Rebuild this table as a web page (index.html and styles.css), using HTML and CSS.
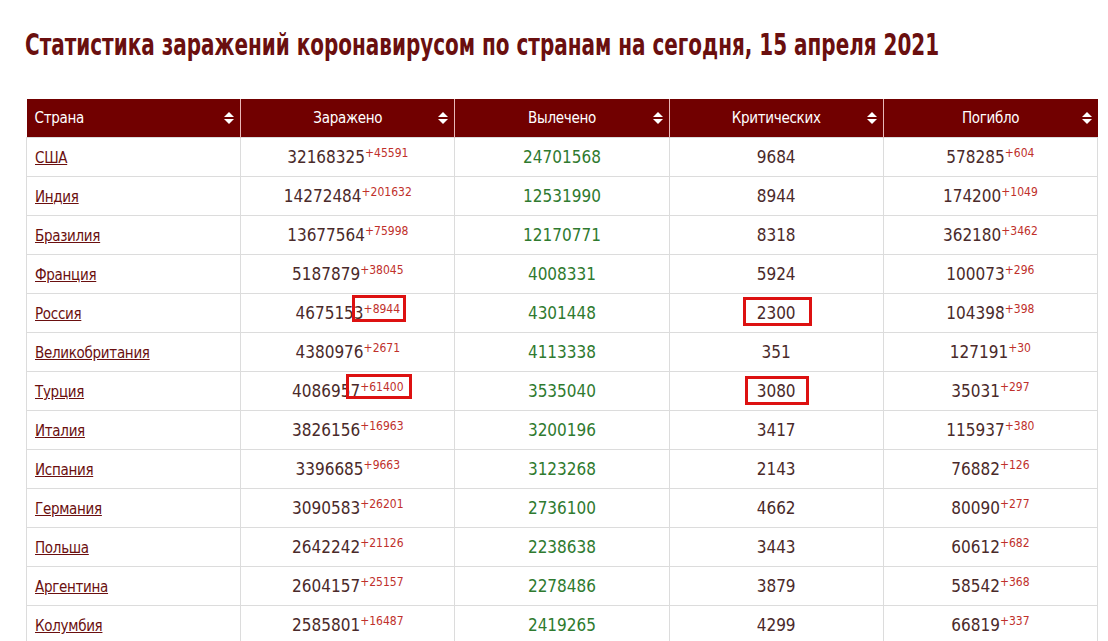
FILE: index.html
```html
<!DOCTYPE html>
<html lang="ru">
<head>
<meta charset="utf-8">
<title>Статистика</title>
<link rel="stylesheet" href="styles.css">
</head>
<body>
<div class="page">
  <h1 class="title">Статистика заражений коронавирусом по странам на сегодня, 15 апреля 2021</h1>
  <div class="table-wrap">
    <table class="stats">
      <thead>
        <tr>
          <th class="left">Страна<span class="sort"></span></th>
          <th>Заражено<span class="sort"></span></th>
          <th>Вылечено<span class="sort"></span></th>
          <th>Критических<span class="sort"></span></th>
          <th>Погибло<span class="sort"></span></th>
        </tr>
      </thead>
      <tbody>
        <tr><td class="left"><a href="#">США</a></td><td>32168325<sup>+45591</sup></td><td class="green">24701568</td><td>9684</td><td>578285<sup>+604</sup></td></tr>
        <tr><td class="left"><a href="#">Индия</a></td><td>14272484<sup>+201632</sup></td><td class="green">12531990</td><td>8944</td><td>174200<sup>+1049</sup></td></tr>
        <tr><td class="left"><a href="#">Бразилия</a></td><td>13677564<sup>+75998</sup></td><td class="green">12170771</td><td>8318</td><td>362180<sup>+3462</sup></td></tr>
        <tr><td class="left"><a href="#">Франция</a></td><td>5187879<sup>+38045</sup></td><td class="green">4008331</td><td>5924</td><td>100073<sup>+296</sup></td></tr>
        <tr><td class="left"><a href="#">Россия</a></td><td>4675153<sup>+8944</sup></td><td class="green">4301448</td><td>2300</td><td>104398<sup>+398</sup></td></tr>
        <tr><td class="left"><a href="#">Великобритания</a></td><td>4380976<sup>+2671</sup></td><td class="green">4113338</td><td>351</td><td>127191<sup>+30</sup></td></tr>
        <tr><td class="left"><a href="#">Турция</a></td><td>4086957<sup>+61400</sup></td><td class="green">3535040</td><td>3080</td><td>35031<sup>+297</sup></td></tr>
        <tr><td class="left"><a href="#">Италия</a></td><td>3826156<sup>+16963</sup></td><td class="green">3200196</td><td>3417</td><td>115937<sup>+380</sup></td></tr>
        <tr><td class="left"><a href="#">Испания</a></td><td>3396685<sup>+9663</sup></td><td class="green">3123268</td><td>2143</td><td>76882<sup>+126</sup></td></tr>
        <tr><td class="left"><a href="#">Германия</a></td><td>3090583<sup>+26201</sup></td><td class="green">2736100</td><td>4662</td><td>80090<sup>+277</sup></td></tr>
        <tr><td class="left"><a href="#">Польша</a></td><td>2642242<sup>+21126</sup></td><td class="green">2238638</td><td>3443</td><td>60612<sup>+682</sup></td></tr>
        <tr><td class="left"><a href="#">Аргентина</a></td><td>2604157<sup>+25157</sup></td><td class="green">2278486</td><td>3879</td><td>58542<sup>+368</sup></td></tr>
        <tr><td class="left"><a href="#">Колумбия</a></td><td>2585801<sup>+16487</sup></td><td class="green">2419265</td><td>4299</td><td>66819<sup>+337</sup></td></tr>
      </tbody>
    </table>
    <span class="mark m1"></span>
    <span class="mark m2"></span>
    <span class="mark m3"></span>
    <span class="mark m4"></span>
  </div>
</div>
</body>
</html>
```
FILE: styles.css
```css
html, body {
  margin: 0;
  padding: 0;
  background: #fff;
}
body {
  font-family: "DejaVu Sans Condensed", "DejaVu Sans", sans-serif;
  font-stretch: condensed;
  color: #3b1b1b;
}
.page {
  padding: 26px 10px 0 26px;
}
.title {
  margin: 0 0 0 -1px;
  font-size: 30px;
  line-height: 38px;
  font-weight: bold;
  color: #6a0f0f;
  white-space: nowrap;
  transform: scaleX(0.74);
  transform-origin: left center;
}
.table-wrap {
  position: relative;
  margin-top: 35px;
  width: 1072px;
}
.stats {
  border-collapse: collapse;
  width: 1072px;
  table-layout: fixed;
}
.stats th {
  position: relative;
  background: #710000;
  color: #fff;
  font-weight: normal;
  font-size: 15px;
  letter-spacing: -0.3px;
  height: 38px;
  padding: 0 8px;
  text-align: center;
  border-left: 1px solid #e8b7b7;
  border-right: 1px solid #e8b7b7;
}
.stats th:first-child { border-left: none; }
.stats th:last-child { border-right: none; }
.stats th.left { text-align: left; }
.sort {
  position: absolute;
  right: 6px;
  top: 13px;
  width: 0;
  height: 0;
}
.sort::before, .sort::after {
  content: "";
  position: absolute;
  right: 0;
  border-left: 5px solid transparent;
  border-right: 5px solid transparent;
}
.sort::before {
  top: 0;
  border-bottom: 5px solid #fff;
}
.sort::after {
  top: 7px;
  border-top: 5px solid #fff;
}
.stats td {
  height: 38px;
  padding: 0 8px;
  border: 1px solid #dcdcdc;
  text-align: center;
  font-size: 17px;
  color: #4a2a2a;
}
.stats td.left { text-align: left; }
.stats td.green { color: #2f7a2f; }
.stats a {
  color: #6a0f0f;
  font-size: 15px;
  letter-spacing: -0.3px;
  text-decoration: underline;
}
.stats sup {
  font-size: 12px;
  color: #c0302b;
  vertical-align: 6px;
  line-height: 0;
}
.mark {
  position: absolute;
  border: 3px solid #dd1111;
  box-sizing: border-box;
}
.m1 { left: 326px; top: 196px; width: 54px; height: 27px; }
.m2 { left: 717px; top: 198px; width: 69px; height: 29px; }
.m3 { left: 320px; top: 275px; width: 66px; height: 25px; }
.m4 { left: 719px; top: 277px; width: 64px; height: 29px; }
```
